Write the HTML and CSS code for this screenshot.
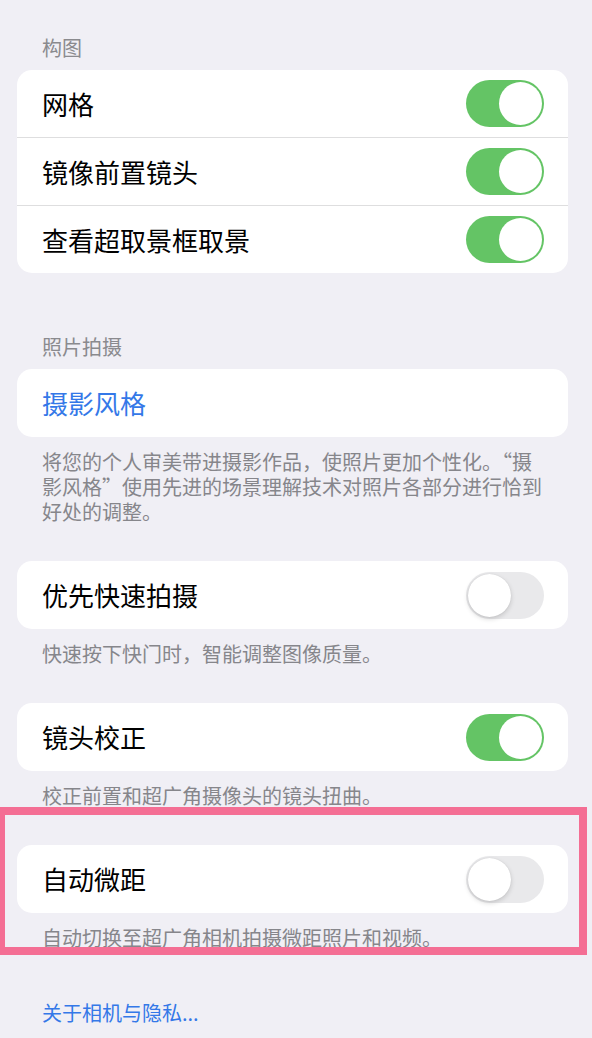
FILE: index.html
```html
<!DOCTYPE html>
<html lang="zh-CN">
<head>
  <meta charset="UTF-8" />
  <meta name="viewport" content="width=device-width, initial-scale=1.0" />
  <title>相机设置</title>
  <link rel="stylesheet" href="styles.css">
</head>
<body>
  <div class="page">
    <div class="section-title">构图</div>
    <div class="card">
      <div class="row">
        <span class="label">网格</span>
        <span class="toggle on"></span>
      </div>
      <div class="row">
        <span class="label">镜像前置镜头</span>
        <span class="toggle on"></span>
      </div>
      <div class="row">
        <span class="label">查看超取景框取景</span>
        <span class="toggle on"></span>
      </div>
    </div>

    <div class="section-title second">照片拍摄</div>
    <div class="group">
      <div class="card">
        <div class="row">
          <span class="label link">摄影风格</span>
        </div>
      </div>
      <p class="footer">将您的个人审美带进摄影作品，使照片更加个性化。“摄影风格”使用先进的场景理解技术对照片各部分进行恰到好处的调整。</p>
    </div>

    <div class="group">
      <div class="card">
        <div class="row">
          <span class="label">优先快速拍摄</span>
          <span class="toggle"></span>
        </div>
      </div>
      <p class="footer">快速按下快门时，智能调整图像质量。</p>
    </div>

    <div class="group">
      <div class="card">
        <div class="row">
          <span class="label">镜头校正</span>
          <span class="toggle on"></span>
        </div>
      </div>
      <p class="footer">校正前置和超广角摄像头的镜头扭曲。</p>
    </div>

    <div class="group">
      <div class="card">
        <div class="row">
          <span class="label">自动微距</span>
          <span class="toggle"></span>
        </div>
      </div>
      <p class="footer">自动切换至超广角相机拍摄微距照片和视频。</p>
    </div>

    <a class="about" href="#">关于相机与隐私...</a>
  </div>
  <div class="highlight"></div>
</body>
</html>
```

FILE: styles.css
```css
body {
  margin: 0;
  background-color: #f0eff5;
  font-family: "Noto Sans CJK SC", "Noto Sans", sans-serif;
  color: #000;
  position: relative;
  height: 1038px;
  overflow: hidden;
}
.page {
  padding: 35px 24px 0 17px;
}
.section-title {
  font-size: 20px;
  line-height: 25px;
  color: #8a8a8e;
  padding-left: 25px;
  margin-bottom: 10px;
}
.section-title.second {
  margin-top: 61px;
}
.card {
  background-color: #fff;
  border-radius: 15px;
  overflow: hidden;
}
.row {
  height: 67px;
  padding: 0 24px 0 25px;
  display: flex;
  align-items: center;
  justify-content: space-between;
  position: relative;
}
.row + .row {
  border-top: 1px solid #dededf;
}
.card > .row:only-child {
  height: 68px;
}
.label {
  font-size: 26px;
  line-height: 32px;
}
.link {
  color: #3478e8;
}
.toggle {
  width: 78px;
  height: 47px;
  border-radius: 24px;
  background-color: #e9e9eb;
  position: relative;
  flex-shrink: 0;
}
.toggle::after {
  content: "";
  position: absolute;
  top: 2px;
  left: 2px;
  width: 43px;
  height: 43px;
  border-radius: 50%;
  background-color: #fff;
  box-shadow: 0 2px 5px rgba(0, 0, 0, 0.16), 0 0 1px rgba(0, 0, 0, 0.12);
}
.toggle.on {
  background-color: #64c465;
}
.toggle.on::after {
  left: 33px;
  box-shadow: none;
}
.group {
  margin-bottom: 37px;
}
.group:nth-of-type(2) {
  margin-bottom: 38px;
}
.footer {
  margin: 12px 0 0;
  padding: 0 22px 0 25px;
  font-size: 20px;
  line-height: 25px;
  color: #86868b;
}
.about {
  display: block;
  margin-top: 50px;
  padding-left: 25px;
  font-size: 20px;
  line-height: 25px;
  color: #3478e8;
  text-decoration: none;
}
.highlight {
  position: absolute;
  left: -3px;
  top: 807px;
  width: 574px;
  height: 132px;
  border: 8px solid #f46e94;
}
```
